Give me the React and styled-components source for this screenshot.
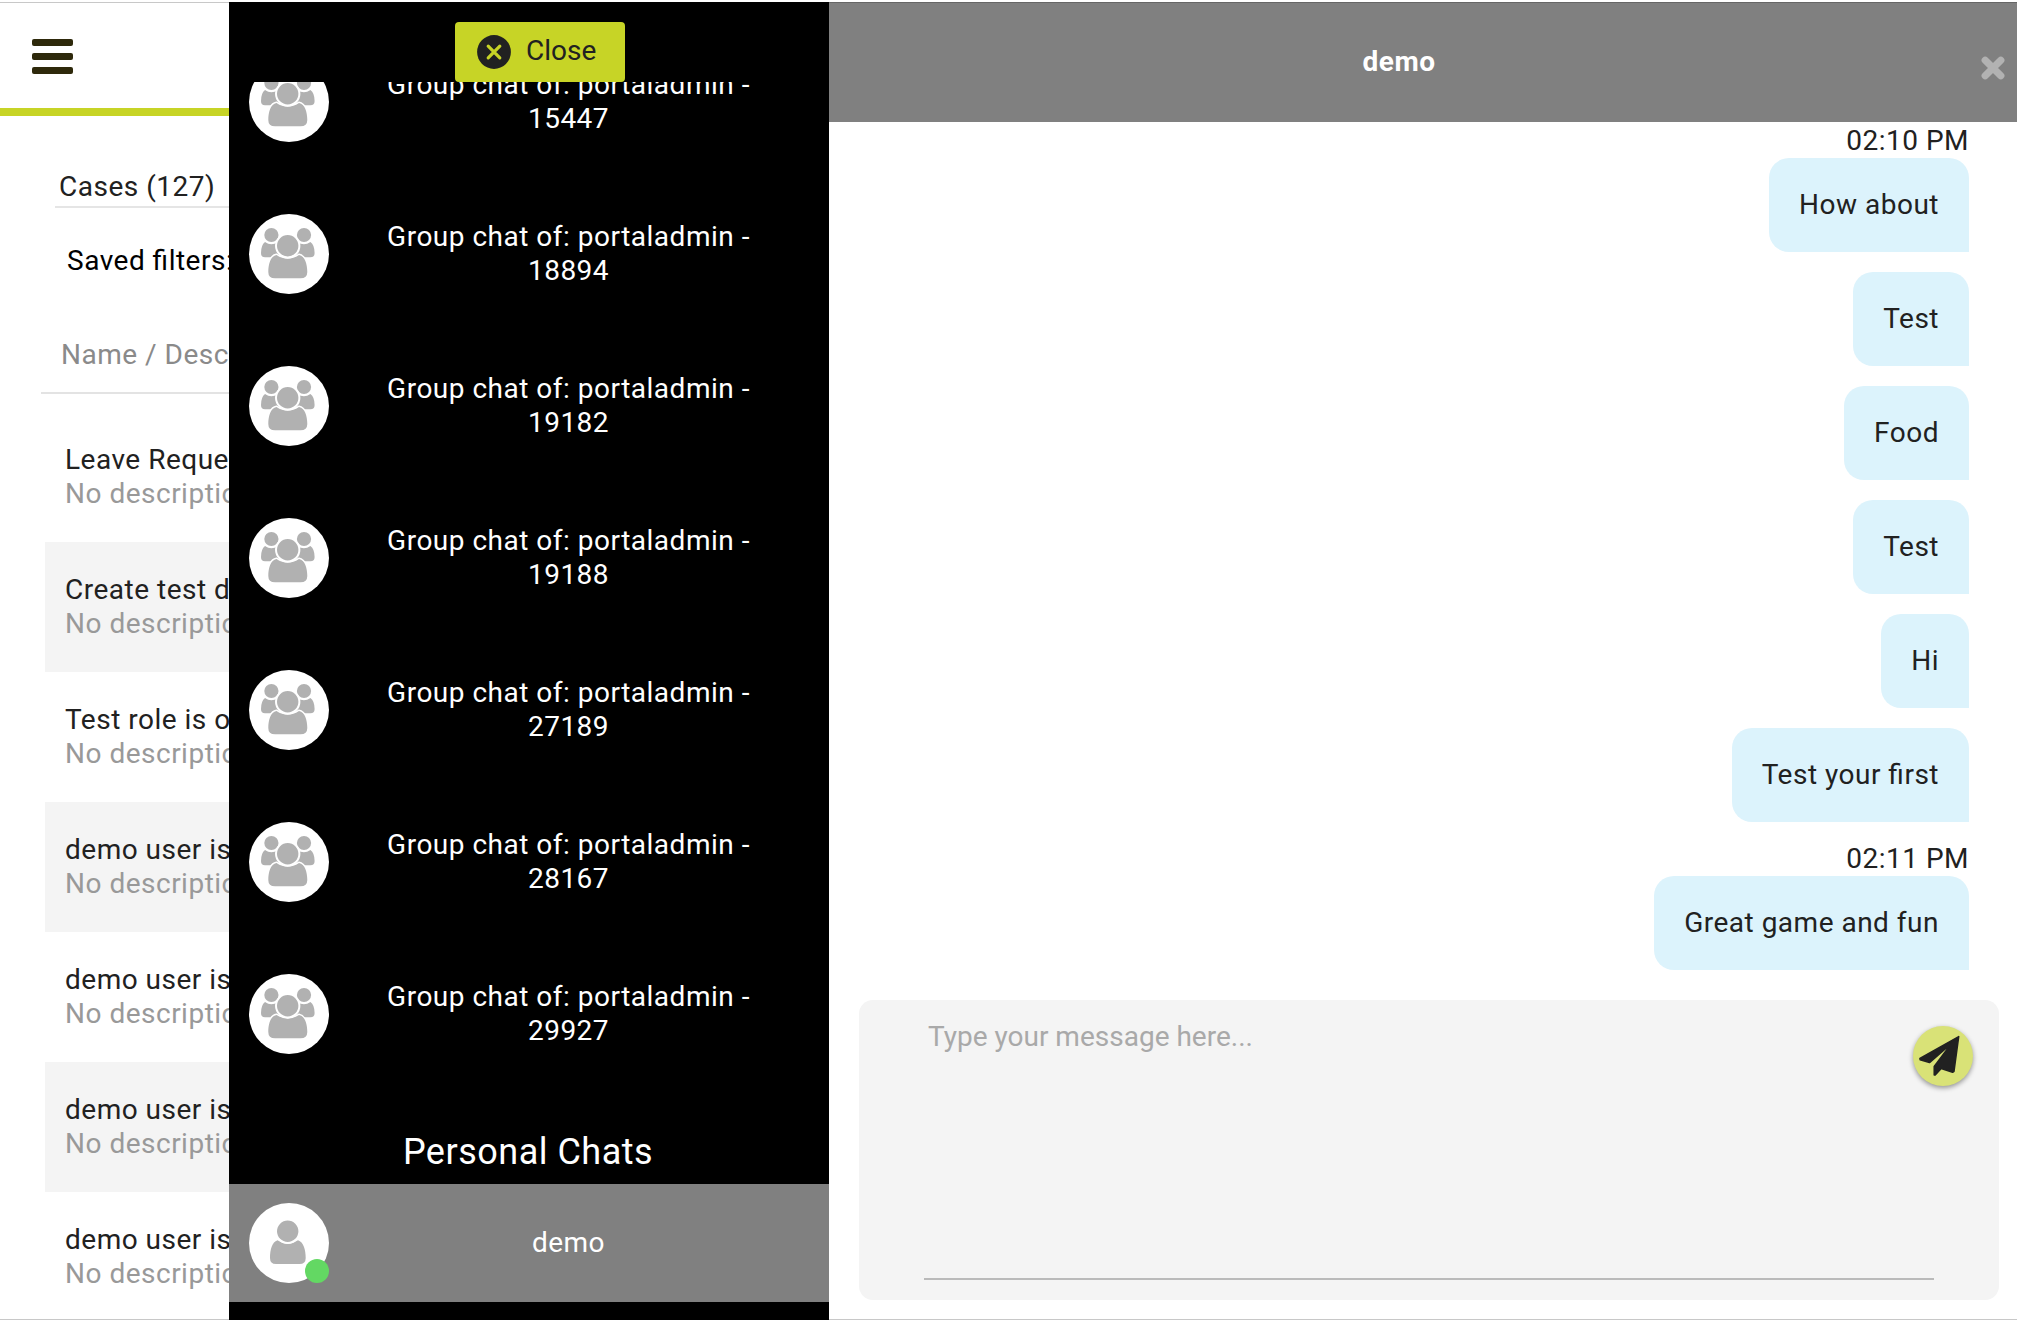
import React from "react";
import styled, { createGlobalStyle, css } from "styled-components";

const GlobalStyle = createGlobalStyle`
  * { box-sizing: border-box; }
  html, body { margin: 0; height: 100%; overflow: hidden; background: #fff; }
  body {
    font-family: Roboto, "Liberation Sans", sans-serif;
    font-size: 28px;
    line-height: 34px;
    letter-spacing: 0.5px;
    font-feature-settings: "liga" 1;
    color: #212121;
  }
`;

const Page = styled.div`
  display: grid;
  grid-template-columns: 229px 600px minmax(0, 1fr);
  height: 1320px;
  padding-top: 2px;
  background: #fff;
`;

/* ---- cases page, left ---- */

const CasesPane = styled.section`
  display: flex;
  flex-direction: column;
  min-height: 0;
  overflow: hidden;
  white-space: nowrap;
  border-top: 1px solid #c8c8c8;
  border-bottom: 1px solid #c8c8c8;
`;

const TopBar = styled.header`
  flex: none;
  height: 113px;
  padding: 36px 0 0 32px;
  border-bottom: 8px solid #c7d426;
`;

const MenuButton = styled.button`
  display: flex;
  flex-direction: column;
  gap: 7px;
  width: 41px;
  padding: 0;
  border: 0;
  background: none;
`;

const MenuBar = styled.span`
  height: 7px;
  border-radius: 2px;
  background: #2e290b;
`;

const CasesTitle = styled.h1`
  flex: none;
  height: 55px;
  margin: 37px 0 0 55px;
  padding: 17px 0 0 4px;
  border-bottom: 2px solid #e5e5e5;
  font-size: 28px;
  font-weight: 400;
`;

const SavedFilters = styled.div`
  flex: none;
  margin: 36px 0 0 67px;
  color: #000;
`;

const TableHead = styled.div`
  flex: none;
  height: 56px;
  margin: 60px 0 0 41px;
  padding-left: 20px;
  border-bottom: 2px solid #e3e3e3;
  color: #8a8a8a;
`;

const CaseRows = styled.div`
  flex: none;
  margin: 18px 0 0 45px;
`;

const CaseRow = styled.article`
  height: 130px;
  padding: 31px 0 0 20px;
  background: ${(p) => (p.$shaded ? "#f4f4f4" : "#fff")};
`;

const CaseNote = styled.div`
  color: #999;
`;

/* ---- chat list, middle ---- */

const ChatPanel = styled.aside`
  display: flex;
  flex-direction: column;
  min-height: 0;
  overflow: hidden;
  background: #000;
  color: #fff;
`;

const PanelHead = styled.div`
  flex: none;
  display: flex;
  justify-content: center;
  padding: 20px 0 0 22px;
`;

const CloseButton = styled.button`
  display: flex;
  align-items: center;
  gap: 15px;
  width: 170px;
  height: 60px;
  padding: 0 0 0 22px;
  border: 0;
  border-radius: 4px;
  background: #c7d426;
  color: #212121;
  font: inherit;
  letter-spacing: 0;

  svg { flex: none; display: block; }
  span { margin-top: -2px; }
`;

const ChatScroll = styled.div`
  flex: 1;
  min-height: 0;
  overflow: hidden;
`;

const GroupList = styled.div`
  display: flex;
  flex-direction: column;
  gap: 34px;
  margin-top: -39px;
  padding-bottom: 17px;
`;

const ChatRow = styled.div`
  display: flex;
  align-items: center;
  height: 118px;
  padding: 0 20px;
  ${(p) => p.$active && css`background: #808080;`}
`;

const Avatar = styled.div`
  position: relative;
  flex: none;
  width: 80px;
  height: 80px;
  border-radius: 50%;
  background: #fff;

  svg { display: block; }
`;

const OnlineDot = styled.span`
  position: absolute;
  right: 0;
  bottom: 0;
  width: 24px;
  height: 24px;
  border-radius: 50%;
  background: #63d863;
`;

const ChatName = styled.div`
  flex: 1;
  padding: 0 56px 0 55px;
  text-align: center;
`;

const SectionTitle = styled.h2`
  height: 94px;
  margin: 0;
  padding: 40px 2px 0 0;
  font-size: 36px;
  font-weight: 400;
  line-height: 44px;
  text-align: center;
`;

/* ---- conversation, right ---- */

const Conversation = styled.main`
  display: flex;
  flex-direction: column;
  min-width: 0;
  min-height: 0;
  border-bottom: 1px solid #c8c8c8;
`;

const ConversationHead = styled.header`
  flex: none;
  display: flex;
  align-items: center;
  height: 120px;
  padding: 0 12px 0 0;
  border-top: 1px solid #666;
  background: #808080;
  color: #fff;
`;

const PeerName = styled.h2`
  flex: 1;
  margin: 0 0 1px;
  padding-left: 14px;
  font-size: 28px;
  font-weight: 700;
  text-align: center;
`;

const DismissButton = styled.button`
  width: 50px;
  height: 24px;
  margin-top: 10px;
  padding: 0 0 0 26px;
  border: 0;
  background: none;

  svg { display: block; }
`;

const Messages = styled.div`
  flex: none;
  display: flex;
  flex-direction: column;
  align-items: flex-end;
  height: 878px;
  padding: 2px 48px 0 0;
`;

const Time = styled.time`
  height: 34px;
`;

const Bubble = styled.div`
  flex: none;
  margin-bottom: 20px;
  padding: 30px;
  border-radius: 20px 20px 0 20px;
  background: #dcf3fc;
`;

const Composer = styled.div`
  flex: none;
  display: flex;
  justify-content: space-between;
  height: 300px;
  margin: 0 18px 0 30px;
  padding: 20px 26px 20px 65px;
  border-radius: 14px;
  background: #f4f4f4;
`;

const MessageInput = styled.textarea`
  width: 1010px;
  height: 260px;
  padding: 0 4px;
  border: 0;
  border-bottom: 2px solid #bababa;
  background: transparent;
  font: inherit;
  letter-spacing: 0;
  resize: none;
  outline: none;

  &::placeholder { color: #a9a9a9; opacity: 1; }
`;

const SendButton = styled.button`
  width: 60px;
  height: 60px;
  margin: 6px 0 0 -21px;
  padding: 0;
  border: 0;
  border-radius: 50%;
  background: #d9e277;
  box-shadow: 0 2px 5px rgba(0, 0, 0, 0.4);

  svg { display: block; }
`;

const GroupIcon = () => (
  <svg width="80" height="80" viewBox="0 0 80 80" fill="#b1b1b1">
    <path d="M16 28Q22.300 32.500 29 28Q33 31 33 43.300H16Q12 43.300 12 39Q12 31 16 28Z" />
    <path d="M61.400 28Q55 32.500 48.400 28Q44.400 31 44.400 43.300H61.400Q65.600 43.300 65.600 39Q65.600 31 61.400 28Z" />
    <circle cx="22.400" cy="21" r="7.100" />
    <circle cx="55" cy="21" r="7.100" />
    <path stroke="#fff" strokeWidth="2.600" paintOrder="stroke" d="M27.500 40.900Q38.700 48.500 50 40.900C56 42 58.300 50 58.300 58Q58.300 64.300 51.500 64.300H26Q19.300 64.300 19.300 58C19.300 50 21.500 42 27.500 40.900Z" />
    <circle cx="38.700" cy="31.700" r="11.700" stroke="#fff" strokeWidth="2" />
  </svg>
);

const PersonIcon = () => (
  <svg width="80" height="80" viewBox="0 0 80 80" fill="#b1b1b1">
    <path d="M28.500 37.300Q38.700 44.500 49 37.300C54.500 39 56.700 47 56.700 55Q56.700 61 50.500 61H27Q21 61 21 55C21 47 23 39 28.500 37.300Z" />
    <circle cx="38.700" cy="28.300" r="11.700" stroke="#fff" strokeWidth="2" />
  </svg>
);

const CloseCircleIcon = () => (
  <svg width="34" height="34" viewBox="0 0 34 34">
    <circle cx="17" cy="17" r="16.900" fill="#212121" />
    <path d="M11.200 11.200L22.800 22.800M22.800 11.200L11.200 22.800" stroke="#c7d426" strokeWidth="3.200" strokeLinecap="round" />
  </svg>
);

const CrossIcon = () => (
  <svg width="24" height="24" viewBox="0 0 24 24">
    <path d="M4.200 4.200L19.800 19.800M19.800 4.200L4.200 19.800" stroke="#b2b2b2" strokeWidth="7.200" strokeLinecap="round" />
  </svg>
);

const PlaneIcon = () => (
  <svg width="60" height="60" viewBox="0 0 60 60" fill="#212121" stroke="#212121" strokeWidth="1.500" strokeLinejoin="round">
    <path d="M45.700 10.600L6.900 32.400L7.100 33.700L16.500 36.600L38.500 17.500L21.200 40.500V49L22.200 49L28.200 42.500L39.600 46.300L41 45.300Z" />
  </svg>
);

const cases = [
  "Leave Request",
  "Create test data",
  "Test role is on",
  "demo user is",
  "demo user is",
  "demo user is",
  "demo user is",
];

const groupIds = [15447, 18894, 19182, 19188, 27189, 28167, 29927];

const thread = [
  { time: "02:10 PM", texts: ["How about", "Test", "Food", "Test", "Hi", "Test your first"] },
  { time: "02:11 PM", texts: ["Great game and fun"] },
];

export default function App() {
  return (
    <>
      <GlobalStyle />
      <Page>
        <CasesPane>
          <TopBar>
            <MenuButton aria-label="Menu">
              <MenuBar />
              <MenuBar />
              <MenuBar />
            </MenuButton>
          </TopBar>
          <CasesTitle>Cases (127)</CasesTitle>
          <SavedFilters>Saved filters:</SavedFilters>
          <TableHead>Name / Description</TableHead>
          <CaseRows>
            {cases.map((name, i) => (
              <CaseRow key={i} $shaded={i % 2 === 1}>
                <div>{name}</div>
                <CaseNote>No description</CaseNote>
              </CaseRow>
            ))}
          </CaseRows>
        </CasesPane>

        <ChatPanel>
          <PanelHead>
            <CloseButton>
              <CloseCircleIcon />
              <span>Close</span>
            </CloseButton>
          </PanelHead>
          <ChatScroll>
            <GroupList>
              {groupIds.map((id) => (
                <ChatRow key={id}>
                  <Avatar>
                    <GroupIcon />
                  </Avatar>
                  <ChatName>Group chat of: portaladmin - {id}</ChatName>
                </ChatRow>
              ))}
            </GroupList>
            <SectionTitle>Personal Chats</SectionTitle>
            <ChatRow $active>
              <Avatar>
                <PersonIcon />
                <OnlineDot />
              </Avatar>
              <ChatName>demo</ChatName>
            </ChatRow>
          </ChatScroll>
        </ChatPanel>

        <Conversation>
          <ConversationHead>
            <PeerName>demo</PeerName>
            <DismissButton aria-label="Close conversation">
              <CrossIcon />
            </DismissButton>
          </ConversationHead>
          <Messages>
            {thread.map((group) => (
              <React.Fragment key={group.time}>
                <Time>{group.time}</Time>
                {group.texts.map((text, i) => (
                  <Bubble key={i}>{text}</Bubble>
                ))}
              </React.Fragment>
            ))}
          </Messages>
          <Composer>
            <MessageInput placeholder="Type your message here..." />
            <SendButton aria-label="Send">
              <PlaneIcon />
            </SendButton>
          </Composer>
        </Conversation>
      </Page>
    </>
  );
}
